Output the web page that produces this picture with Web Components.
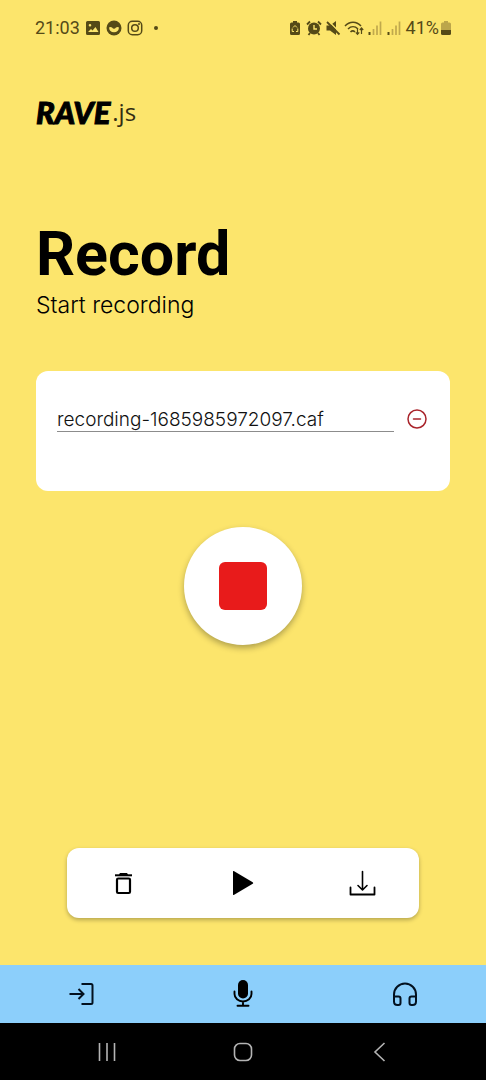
<!DOCTYPE html>
<html lang="en">
<head>
<meta charset="utf-8">
<meta name="viewport" content="width=device-width, initial-scale=1">
<title>Rave.js – Record</title>
<style>
  html, body { margin: 0; min-height: 100%; }
  body { background: #fce56c; color: #000; font-family: Inter, sans-serif; }
</style>
</head>
<body>
<rave-app></rave-app>
<script>
const icons = {
  image: ['0 0 16 16', '<path fill="currentColor" fill-rule="evenodd" d="M2.500 1h11A1.500 1.500 0 0 1 15 2.500v11a1.500 1.500 0 0 1-1.500 1.500h-11A1.500 1.500 0 0 1 1 13.500v-11A1.500 1.500 0 0 1 2.500 1ZM3 12h10.500l-3-5-3 3.500-1.500-1.500ZM5 4a1.300 1.300 0 1 0 0 2.600A1.300 1.300 0 0 0 5 4Z"/>'],
  face: ['0 0 16 16', '<circle cx="8" cy="8" r="7.500" fill="currentColor"/><path d="M3 7.500q1.500-1 3 0 1 1.300 2 1.300t2-1.300q1.500-1 3 0-.5 4.800-5 4.800t-5-4.800Z" fill="#fce56c"/>'],
  camera: ['0 0 16 16', '<g fill="none" stroke="currentColor" stroke-width="1.500"><rect x="1.300" y="1.300" width="13.400" height="13.400" rx="4"/><circle cx="8" cy="8" r="3.300"/></g><circle cx="12" cy="4" r="1" fill="currentColor"/>'],
  saver: ['0 0 16 16', '<path fill="currentColor" d="M6 1h4v1.500h1.500A1.500 1.500 0 0 1 13 4v9.500a1.500 1.500 0 0 1-1.500 1.500h-7A1.500 1.500 0 0 1 3 13.500V4a1.500 1.500 0 0 1 1.500-1.500H6Z"/><path d="m6 7.500 2-2 2 2M10.800 8.500v3H9M7 11.500H5.200v-3" fill="none" stroke="#fce56c"/>'],
  alarm: ['0 0 16 16', '<circle cx="8" cy="8.500" r="6" fill="currentColor"/><path d="m1 4.500 3-3M15 4.500l-3-3M4 13l-1.500 2M12 13l1.500 2" stroke="currentColor" stroke-width="1.800"/><path d="M8 5v4h3" fill="none" stroke="#fce56c" stroke-width="1.400"/>'],
  mute: ['0 0 16 16', '<path d="M1.500 5.500H5l6-4.500v14l-6-4.500H1.500Z" fill="currentColor"/><path d="m3.500 1 12 12" stroke="#fce56c" stroke-width="1.500"/><path d="m2 2 12.500 12.500" stroke="currentColor" stroke-width="1.800"/>'],
  wifi: ['0 0 20 16', '<path d="M1 6c4.500-5 11.500-5 16 0M4 9c3-3 7-3 10 0M6.500 12c1.500-1.500 3-1.500 4.500 0" fill="none" stroke="currentColor" stroke-width="1.500"/><path d="M13.500 9v5m-1.700-1.700 1.700 2 1.700-2M17.500 14V8m-1.700 2 1.700-2 1.700 2" fill="none" stroke="currentColor" stroke-width="1.200"/>'],
  signal: ['0 0 16 16', '<path d="M2.500 12v3" stroke="currentColor" stroke-width="2"/><path d="M6.500 9v6M10 5.500V15M13.500 1.500V15" stroke="#c0a94c" stroke-width="1.700"/>'],
  battery: ['0 0 12 16', '<path d="M4 1h4v1.500h1.500a1.500 1.500 0 0 1 1.500 1.500V10H1V4a1.500 1.500 0 0 1 1.500-1.500H4Z" fill="#bca64b"/><path d="M1 10h10v3.500A1.500 1.500 0 0 1 9.500 15h-7A1.500 1.500 0 0 1 1 13.500Z" fill="currentColor"/>'],
  minus: ['0 0 24 24', '<g fill="none" stroke="#a9242b" stroke-width="1.500"><circle cx="12" cy="12" r="9"/><path d="M8.500 12h7" stroke-linecap="round"/></g>'],
  trash: ['0 0 24 24', '<path d="M4 4.300h17" stroke="currentColor" stroke-width="2"/><path d="M9 2h7l1 1.500v1H8V3.500Z" fill="currentColor"/><rect x="6" y="7.500" width="13" height="14.500" rx="1.200" fill="none" stroke="currentColor" stroke-width="2.200"/>'],
  play: ['0 0 24 24', '<path d="M2 .800v22.400q0 1.300 1.200.600l18.500-11q1-.800 0-1.600L3.200.200Q2-.500 2 .800Z" fill="currentColor"/>'],
  download: ['0 0 28 28', '<g fill="none" stroke="currentColor" stroke-linecap="round" stroke-linejoin="round"><path d="M13.500 2.500v18m-4.500-4 4.500 4.500 4.500-4.500" stroke-width="1.600"/><path d="M1.500 18.500V25.500h24V18.500" stroke-width="1.800"/></g>'],
  enter: ['0 0 26 24', '<path d="M1.500 12h14m-5-5 5 5-5 5M13.500 2H23q1.500 0 1.500 1.500v17Q24.500 22 23 22h-9.500" fill="none" stroke="currentColor" stroke-width="2"/>'],
  mic: ['0 0 24 28', '<rect x="7" y="0" width="10" height="18.500" rx="5" fill="currentColor"/><path d="M3.500 11.500v2.500a8.500 7.500 0 0 0 17 0v-2.500M12 21.500V25.500M6.500 25.800h11" fill="none" stroke="currentColor" stroke-width="1.900" stroke-linecap="round"/>'],
  headphones: ['0 0 26 26', '<g fill="none" stroke="currentColor" stroke-width="2"><path d="M2 21v-7.500a11 11 0 0 1 22 0V21"/><path d="M2 15.500h4.500q2 0 2 2v4.500q0 2-2 2H5.500Q2 24 2 20.500ZM24 15.500h-4.500q-2 0-2 2v4.500q0 2 2 2h1q3.500 0 3.500-3.500Z"/></g>'],
  recents: ['0 0 20 20', '<path d="M2.500 1v18M10 1v18M17.500 1v18" stroke="currentColor" stroke-width="1.600"/>'],
  home: ['0 0 20 20', '<rect x="1.500" y="1.500" width="17" height="17" rx="5.500" fill="none" stroke="currentColor" stroke-width="1.600"/>'],
  back: ['0 0 20 20', '<path d="M15.500 1 6 10l9.500 9" fill="none" stroke="currentColor" stroke-width="1.600"/>']
};

function define(name, html) {
  const template = document.createElement('template');
  template.innerHTML = html;
  customElements.define(name, class extends HTMLElement {
    constructor() {
      super();
      this.attachShadow({ mode: 'open' }).append(template.content.cloneNode(true));
    }
  });
}

customElements.define('rave-icon', class extends HTMLElement {
  constructor() {
    super();
    this.attachShadow({ mode: 'open' });
  }
  connectedCallback() {
    const [box, shapes] = icons[this.getAttribute('name')];
    this.shadowRoot.innerHTML = `<style>
      :host { display: block; flex: none; width: var(--w, 16px); height: var(--h, 16px); }
      svg { display: block; width: 100%; height: 100%; }
    </style><svg viewBox="${box}" aria-hidden="true">${shapes}</svg>`;
  }
});

define('status-bar', `<style>
  :host { display: flex; justify-content: space-between; align-items: center; height: 56px; padding: 0 34px 0 35px; color: #554a17; font: 18px/24px Roboto, sans-serif; }
  div { display: flex; align-items: center; }
  .left { gap: 5px; }
  .right { gap: 3px; }
  .wide { --w: 20px; }
  .dot { width: 4px; height: 4px; border-radius: 50%; background: currentColor; margin-left: 6px; }
  .battery { --w: 12px; }
  .charge { gap: 1px; margin-left: 1px; }
</style>
<div class="left"><span>21:03</span><rave-icon name="image"></rave-icon><rave-icon name="face"></rave-icon><rave-icon name="camera"></rave-icon><i class="dot"></i></div>
<div class="right"><rave-icon name="saver"></rave-icon><rave-icon name="alarm"></rave-icon><rave-icon name="mute"></rave-icon><rave-icon class="wide" name="wifi"></rave-icon><rave-icon name="signal"></rave-icon><rave-icon name="signal"></rave-icon><div class="charge"><span>41%</span><rave-icon class="battery" name="battery"></rave-icon></div></div>`);

define('rave-logo', `<style>
  :host { display: flex; align-items: flex-start; gap: 2px; height: 40px; }
  b { font: italic 900 31px/40px Lato, sans-serif; -webkit-text-stroke: 1px currentColor; }
  span { font: 24px/40px "Open Sans", sans-serif; color: #332d12; }
</style><b>RAVE</b><span>.js</span>`);

define('page-title', `<style>
  :host { display: block; }
  h1 { margin: 0; font: 700 61px/72px Roboto, sans-serif; }
  p { margin: 0; font: 300 23px/30px Inter, sans-serif; }
</style><h1><slot></slot></h1><p><slot name="subtitle"></slot></p>`);

define('recording-card', `<style>
  :host { display: flex; align-items: flex-start; box-sizing: border-box; min-height: 120px; padding: 36px 21px; border-radius: 12px; background: #fff; }
  input { flex: 1; min-width: 0; box-sizing: border-box; height: 25px; padding: 0; border: 0; border-bottom: 1px solid #8c8c8c; background: none; color: #111; font: 300 19px/24px Inter, sans-serif; outline: 0; border-radius: 0; }
  button { display: grid; place-items: center; width: 24px; height: 24px; margin-left: 11px; padding: 0; border: 0; background: none; --w: 24px; --h: 24px; }
</style>
<input type="text" aria-label="Recording name" value="recording-1685985972097.caf">
<button type="button" aria-label="Remove recording"><rave-icon name="minus"></rave-icon></button>`);

define('stop-button', `<style>
  :host { display: block; }
  button { display: grid; place-items: center; width: 118px; height: 118px; padding: 0; border: 0; border-radius: 50%; background: #fff; box-shadow: 0 3px 6px rgb(0 0 0 / .3); }
  i { width: 48px; height: 48px; border-radius: 6px; background: #e81b1b; }
</style><button type="button" aria-label="Stop recording"><i></i></button>`);

define('player-bar', `<style>
  :host { display: flex; justify-content: space-between; align-items: center; box-sizing: border-box; height: 70px; padding: 0 32px; border-radius: 12px; background: #fff; box-shadow: 0 2px 4px rgb(0 0 0 / .28); }
  button { display: grid; place-items: center; width: 48px; height: 48px; padding: 0; border: 0; background: none; color: #000; --w: 24px; --h: 24px; }
  .download { --w: 28px; --h: 28px; }
</style>
<button type="button" aria-label="Delete"><rave-icon name="trash"></rave-icon></button>
<button type="button" aria-label="Play"><rave-icon name="play"></rave-icon></button>
<button type="button" aria-label="Download" class="download"><rave-icon name="download"></rave-icon></button>`);

define('tab-bar', `<style>
  :host { display: block; background: #8ccffb; }
  nav { display: grid; grid-template-columns: repeat(3, 1fr); height: 58px; }
  a { display: grid; place-items: center; color: #03111f; --w: 26px; --h: 24px; }
  .mic { color: #000; --w: 24px; --h: 28px; }
  .phones { --h: 26px; }
</style><nav aria-label="Main">
<a href="#login" aria-label="Connect"><rave-icon name="enter"></rave-icon></a>
<a href="#record" aria-label="Record" class="mic"><rave-icon name="mic"></rave-icon></a>
<a href="#listen" aria-label="Listen" class="phones"><rave-icon name="headphones"></rave-icon></a></nav>`);

define('system-bar', `<style>
  :host { display: block; background: #000; }
  div { display: grid; grid-template-columns: repeat(3, 1fr); width: 84%; height: 57px; margin: 0 auto; }
  button { display: grid; place-items: center; padding: 0; border: 0; background: none; color: #b4b4b4; --w: 20px; --h: 20px; }
</style><div>
<button type="button" aria-label="Recent apps"><rave-icon name="recents"></rave-icon></button>
<button type="button" aria-label="Home"><rave-icon name="home"></rave-icon></button>
<button type="button" aria-label="Back"><rave-icon name="back"></rave-icon></button></div>`);

define('rave-app', `<style>
  :host { display: flex; flex-direction: column; min-height: 100vh; }
  main { flex: 1; display: flex; flex-direction: column; padding: 36px 36px 47px; }
  page-title { margin-top: 86px; }
  recording-card { margin-top: 51px; }
  stop-button { align-self: center; margin: 36px 0; }
  player-bar { margin: auto 31px 0; }
</style>
<status-bar></status-bar>
<main>
  <rave-logo></rave-logo>
  <page-title>Record<span slot="subtitle">Start recording</span></page-title>
  <recording-card></recording-card>
  <stop-button></stop-button>
  <player-bar></player-bar>
</main>
<tab-bar></tab-bar>
<system-bar></system-bar>`);
</script>
</body>
</html>
